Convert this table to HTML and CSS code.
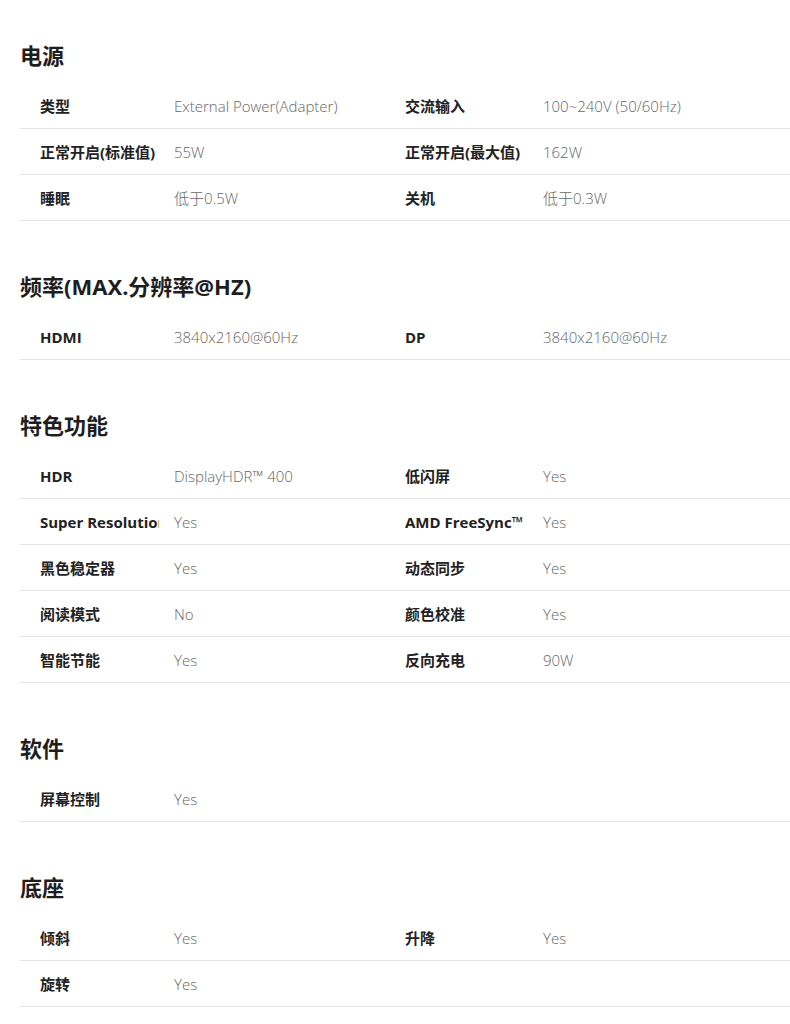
FILE: index.html
```html
<!DOCTYPE html>
<html lang="zh-CN">
<head>
<meta charset="utf-8">
<title>规格</title>
<link rel="stylesheet" href="styles.css">
</head>
<body>
<main class="specs">
  <section class="group">
    <h2 class="group-title">电源</h2>
    <div class="row">
      <div class="label"><span>类型</span></div><div class="value">External Power(Adapter)</div>
      <div class="label"><span>交流输入</span></div><div class="value">100~240V (50/60Hz)</div>
    </div>
    <div class="row">
      <div class="label"><span>正常开启(标准值)</span></div><div class="value">55W</div>
      <div class="label"><span>正常开启(最大值)</span></div><div class="value">162W</div>
    </div>
    <div class="row">
      <div class="label"><span>睡眠</span></div><div class="value">低于0.5W</div>
      <div class="label"><span>关机</span></div><div class="value">低于0.3W</div>
    </div>
  </section>

  <section class="group">
    <h2 class="group-title">频率(MAX.分辨率@HZ)</h2>
    <div class="row">
      <div class="label"><span>HDMI</span></div><div class="value">3840x2160@60Hz</div>
      <div class="label"><span>DP</span></div><div class="value">3840x2160@60Hz</div>
    </div>
  </section>

  <section class="group">
    <h2 class="group-title">特色功能</h2>
    <div class="row">
      <div class="label"><span>HDR</span></div><div class="value">DisplayHDR™ 400</div>
      <div class="label"><span>低闪屏</span></div><div class="value">Yes</div>
    </div>
    <div class="row">
      <div class="label"><span>Super Resolution</span></div><div class="value">Yes</div>
      <div class="label"><span>AMD FreeSync™</span></div><div class="value">Yes</div>
    </div>
    <div class="row">
      <div class="label"><span>黑色稳定器</span></div><div class="value">Yes</div>
      <div class="label"><span>动态同步</span></div><div class="value">Yes</div>
    </div>
    <div class="row">
      <div class="label"><span>阅读模式</span></div><div class="value">No</div>
      <div class="label"><span>颜色校准</span></div><div class="value">Yes</div>
    </div>
    <div class="row">
      <div class="label"><span>智能节能</span></div><div class="value">Yes</div>
      <div class="label"><span>反向充电</span></div><div class="value">90W</div>
    </div>
  </section>

  <section class="group">
    <h2 class="group-title">软件</h2>
    <div class="row">
      <div class="label"><span>屏幕控制</span></div><div class="value">Yes</div>
    </div>
  </section>

  <section class="group">
    <h2 class="group-title">底座</h2>
    <div class="row">
      <div class="label"><span>倾斜</span></div><div class="value">Yes</div>
      <div class="label"><span>升降</span></div><div class="value">Yes</div>
    </div>
    <div class="row">
      <div class="label"><span>旋转</span></div><div class="value">Yes</div>
    </div>
  </section>
</main>
</body>
</html>
```
FILE: styles.css
```css
html, body {
  margin: 0;
  padding: 0;
  background: #ffffff;
}

body {
  font-family: "Noto Sans", "Noto Sans CJK SC", sans-serif;
  color: #222222;
}

.specs {
  padding: 40px 0 0 20px;
  display: flex;
  flex-direction: column;
  gap: 50px;
}

.group {
  display: flex;
  flex-direction: column;
}

.group-title {
  margin: 0 0 13px 0;
  height: 30px;
  line-height: 30px;
  font-size: 22px;
  font-weight: 700;
  color: #1e1e1e;
  font-family: "Noto Sans", "Noto Sans CJK SC", sans-serif;
}

.row {
  display: grid;
  grid-template-columns: 134px 231px 138px 1fr;
  align-items: center;
  height: 45px;
  padding-left: 20px;
  border-bottom: 1px solid #e6e6e6;
}

.label {
  padding-right: 15px;
}

.label span {
  display: block;
  overflow: hidden;
  white-space: nowrap;
  font-size: 15px;
  font-weight: 700;
  color: #222222;
  font-family: "Open Sans", "Noto Sans CJK SC", sans-serif;
}

.value {
  font-size: 15px;
  font-weight: 300;
  color: #666666;
  white-space: nowrap;
  font-family: "Open Sans", "Noto Sans CJK SC", sans-serif;
}
```
